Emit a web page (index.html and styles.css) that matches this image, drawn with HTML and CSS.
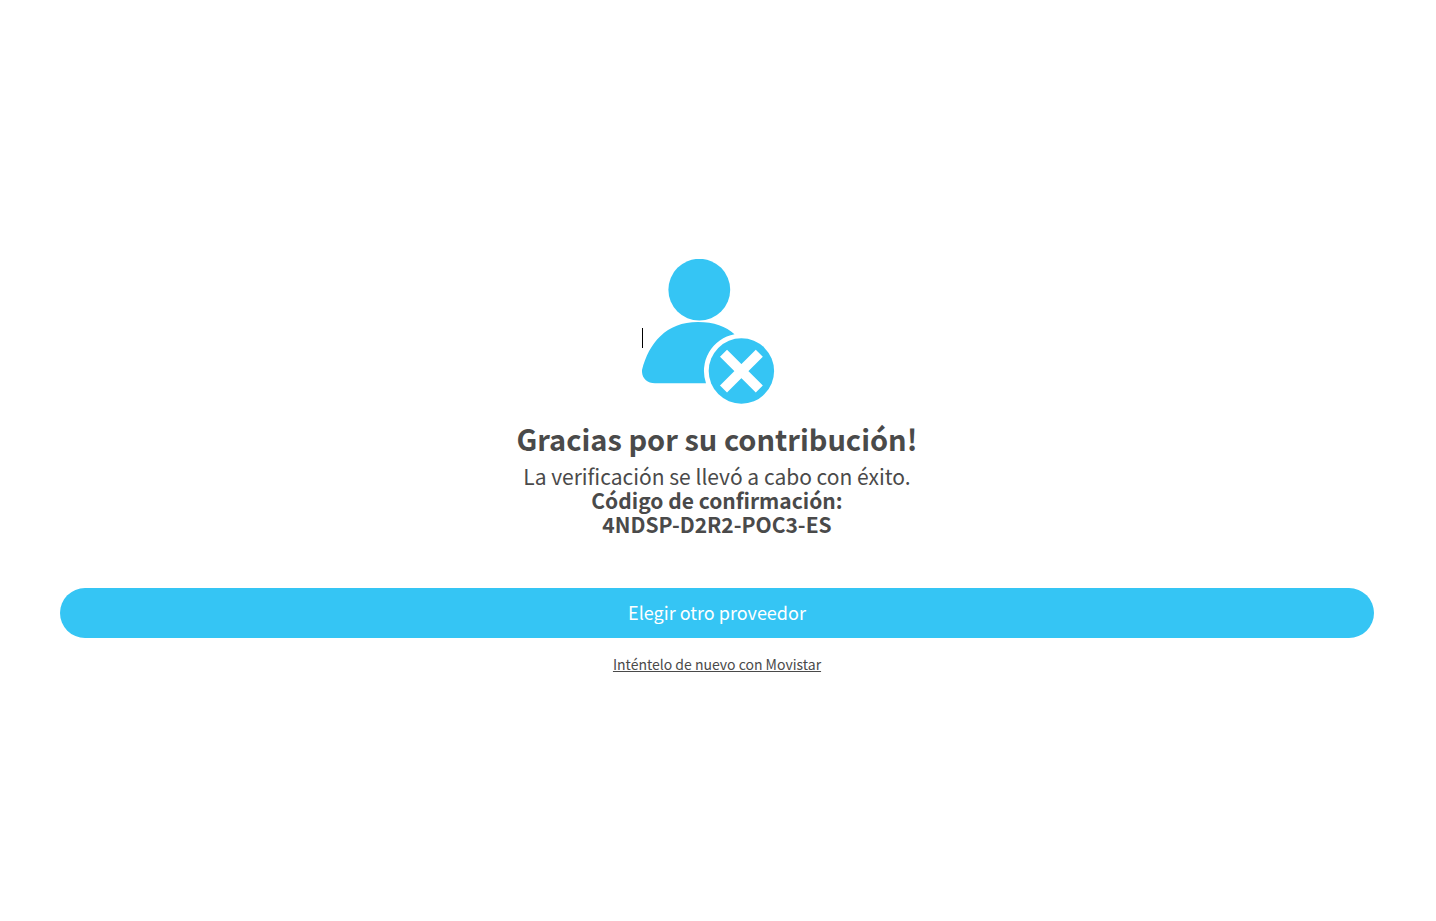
FILE: index.html
```html
<!DOCTYPE html>
<html lang="es">
<head>
<meta charset="utf-8">
<meta name="viewport" content="width=device-width, initial-scale=1">
<title>Gracias por su contribución</title>
<link rel="stylesheet" href="styles.css">
</head>
<body>
<main class="page">
  <div class="figure">
    <svg class="user-icon" viewBox="0 0 150 145" aria-hidden="true">
      <circle cx="57.3" cy="30.7" r="30.9"/>
      <path d="M0 111C7 84 24 63 56 63C72 63 84 67.500 92.500 75.200A37.500 37.500 0 0 0 64 124.300H13C5 124.300-.5 119 0 111Z"/>
      <circle cx="99.4" cy="112" r="32.700"/>
      <path class="cross" d="M81.500 94.300L117.300 130M117.300 94.300L81.500 130"/>
    </svg>
    <span class="caret"></span>
  </div>
  <h1 class="title">Gracias por su contribución!</h1>
  <p class="message">La verificación se llevó a cabo con éxito.<br>
    <strong>Código de confirmación:<br>4NDSP-D2R2-POC3-ES</strong></p>
  <button class="primary" type="button">Elegir otro proveedor</button>
  <a class="retry" href="#">Inténtelo de nuevo con Movistar</a>
</main>
</body>
</html>
```
FILE: styles.css
```css
* { box-sizing: border-box; }

body {
  margin: 0;
  background: #fff;
  color: #4a4a4a;
  font-family: "Noto Sans CJK SC", "Noto Sans", sans-serif;
}

.page {
  min-height: 100vh;
  padding: 12px 62px 0 60px;
  display: flex;
  flex-direction: column;
  align-items: center;
  justify-content: center;
  text-align: center;
}

.figure {
  position: relative;
  width: 150px;
}

.user-icon {
  display: block;
  width: 100%;
  fill: #35c5f4;
}

.cross {
  fill: none;
  stroke: #fff;
  stroke-width: 10;
}

.caret {
  position: absolute;
  left: 0;
  top: 69px;
  width: 1px;
  height: 20px;
  background: #000;
}

.title {
  margin: 18px 0 10px;
  font-size: 29px;
  line-height: 32px;
  font-weight: 700;
}

.message {
  margin: 0;
  font-size: 21px;
  line-height: 24px;
}

.primary {
  width: 100%;
  height: 50px;
  margin: 52px 0 16px;
  padding: 0 0 2px;
  border: 0;
  border-radius: 25px;
  background: #35c5f4;
  color: #fff;
  font-family: inherit;
  font-size: 18px;
}

.retry {
  color: inherit;
  font-size: 14px;
  line-height: 20px;
}
```
